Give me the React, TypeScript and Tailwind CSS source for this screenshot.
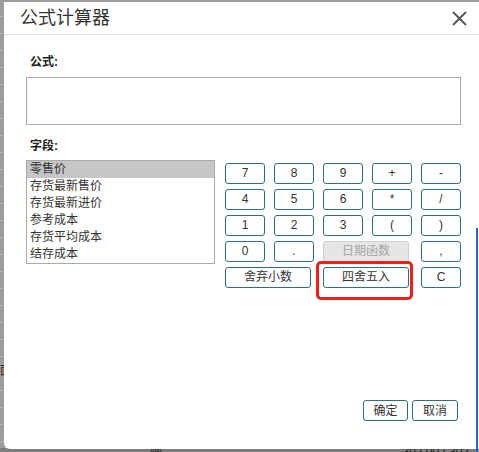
import React, { useState } from "react";

const FONT = { fontFamily: '"Liberation Sans", "Noto Sans CJK SC", sans-serif' };

type Key = { label: string; span?: number; disabled?: boolean };

// calculator keypad, five columns
const KEYS: Key[] = [
  { label: "7" }, { label: "8" }, { label: "9" }, { label: "+" }, { label: "-" },
  { label: "4" }, { label: "5" }, { label: "6" }, { label: "*" }, { label: "/" },
  { label: "1" }, { label: "2" }, { label: "3" }, { label: "(" }, { label: ")" },
  { label: "0" }, { label: "." }, { label: "日期函数", span: 2, disabled: true }, { label: "," },
  { label: "舍弃小数", span: 2 }, { label: "四舍五入", span: 2 }, { label: "C" },
];

const FIELDS = ["零售价", "存货最新售价", "存货最新进价", "参考成本", "存货平均成本", "结存成本"];

const App: React.FC = () => {
  const [formula, setFormula] = useState<string>("");
  const [selected, setSelected] = useState<number>(0);

  const press = (k: Key) => {
    if (k.disabled) return;
    if (k.label === "C") setFormula("");
    else if (k.label === "舍弃小数") setFormula((f) => `INT(${f})`);
    else if (k.label === "四舍五入") setFormula((f) => `ROUND(${f})`);
    else setFormula((f) => f + k.label);
  };

  return (
    <div className="relative w-[479px] h-[452px] overflow-hidden bg-[#9c9c9c]" style={FONT}>
      {/* dimmed page behind the dialog */}
      <div className="flex flex-col">
        {Array.from({ length: 26 }).map((_, i) => (
          <div key={i} className="h-[17px] border-b border-[#b4b4b4]" />
        ))}
      </div>
      <div className="absolute left-0 top-[365px] text-[12px] text-[#222] leading-none">面</div>
      <div className="absolute left-0 bottom-0 right-0 h-[4px] bg-[#7c7c7c] flex items-start text-[12px] text-[#222] leading-none">
        <span className="ml-[150px] -mt-[2px]">咖</span>
        <span className="ml-auto mr-[10px] -mt-[2px]">302.00 | 302</span>
      </div>

      {/* dialog */}
      <div className="absolute left-[4px] top-[2px] w-[480px] h-[447px] bg-white rounded-bl-[6px] flex flex-col">
        <div className="h-[33px] border-b border-[#e2e2e2] flex items-center pl-[16px] pr-[17px]">
          <div className="text-[18px] text-[#333] leading-none">公式计算器</div>
          <button className="ml-auto w-[15px] h-[15px] flex items-center justify-center">
            <svg width="15" height="15" viewBox="0 0 15 15">
              <path d="M1 1L14 14M14 1L1 14" stroke="#555" strokeWidth="1.8" />
            </svg>
          </button>
        </div>

        <div className="pl-[22px] pr-[19px] flex flex-col flex-1">
          <div className="mt-[20px] pl-[4px] text-[12px] font-bold text-[#222] leading-[14px]">公式:</div>
          <textarea
            value={formula}
            onChange={(e) => setFormula(e.target.value)}
            className="mt-[8px] w-[435px] h-[48px] border border-[#a9a9a9] resize-none outline-none text-[12px] p-1"
          />
          <div className="mt-[14px] pl-[4px] text-[12px] font-bold text-[#222] leading-[14px]">字段:</div>

          <div className="mt-[7px] flex">
            <div className="w-[189px] h-[104px] border border-[#aaa] flex flex-col">
              {FIELDS.map((f, i) => (
                <div
                  key={f}
                  onClick={() => setSelected(i)}
                  className={`h-[17px] pl-[3px] text-[12px] leading-[17px] text-[#333] ${
                    i === selected ? "bg-[#c6c6c6]" : ""
                  }`}
                >
                  {f}
                </div>
              ))}
            </div>

            <div className="ml-[10px] grid grid-cols-[repeat(5,40px)] auto-rows-[21px] gap-x-[9px] gap-y-[5px]">
              {KEYS.map((k) => (
                <div key={k.label} className={`relative ${k.span === 2 ? "col-span-2" : ""}`}>
                  <button
                    onClick={() => press(k)}
                    className={`h-[21px] text-[12px] leading-none rounded-[3px] border ${
                      k.span === 2 ? "w-[86px]" : "w-[40px]"
                    } ${
                      k.disabled
                        ? "bg-[#e6e6e6] border-[#cfcfcf] text-[#a8a8a8]"
                        : "bg-white border-[#2f6f78] text-[#333]"
                    }`}
                  >
                    {k.label}
                  </button>
                  {k.label === "四舍五入" && (
                    <div className="absolute -left-[7px] -top-[3px] w-[97px] h-[39px] border-[3px] border-[#e8231b] rounded-[5px] pointer-events-none" />
                  )}
                </div>
              ))}
            </div>
          </div>

          <div className="mt-auto mb-[28px] flex justify-end gap-[4px] pr-[7px]">
            <button className="w-[45px] h-[21px] border border-[#2f6f78] rounded-[3px] text-[12px] text-[#333] leading-none">
              确定
            </button>
            <button className="w-[46px] h-[21px] border border-[#2f6f78] rounded-[3px] text-[12px] text-[#333] leading-none">
              取消
            </button>
          </div>
        </div>
      </div>

      {/* blue edge of the page's scroll area */}
      <div className="absolute right-[1px] top-[228px] bottom-0 w-[2px] bg-[#2a62c9]" />
    </div>
  );
};

export default App;
